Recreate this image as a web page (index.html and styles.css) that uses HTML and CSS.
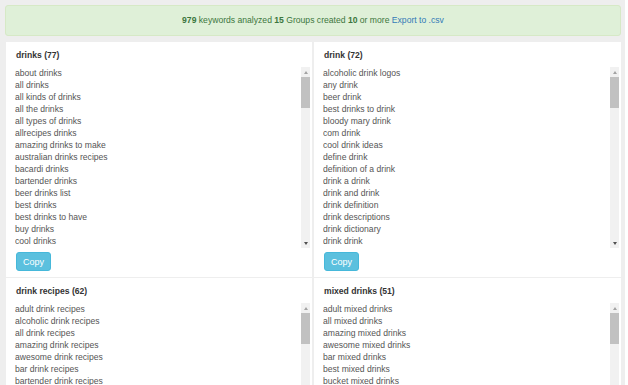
FILE: index.html
```html
<!DOCTYPE html>
<html lang="en">
<head>
    <meta charset="UTF-8">
    <title>Keyword Groups</title>
    <link rel="stylesheet" href="styles.css">
</head>
<body>
    <div class="page">
        <div class="alert">
            <b>979</b> keywords analyzed <b>15</b> Groups created <b>10</b> or more <a href="#">Export to .csv</a>
        </div>
        <div class="groups">
            <div class="group">
                <h4>drinks (77)</h4>
                <div class="listBox">
                    <textarea class="kwList" readonly>about drinks
all drinks
all kinds of drinks
all the drinks
all types of drinks
allrecipes drinks
amazing drinks to make
australian drinks recipes
bacardi drinks
bartender drinks
beer drinks list
best drinks
best drinks to have
buy drinks
cool drinks
cool drinks to make
crown royal drinks
different drinks
drinks at home
drinks delivered
drinks for parties
drinks for women
drinks list
drinks menu
drinks near me
drinks online
drinks recipes
drinks to make
drinks with gin
drinks with rum
drinks with vodka
drinks with whiskey
easy drinks
easy drinks to make
energy drinks
fancy drinks
flavored drinks
frozen drinks
fruity drinks
fun drinks
fun drinks to make
gin drinks
girly drinks
good drinks
good drinks to order
healthy drinks
hot drinks
ice drinks
iced drinks
kahlua drinks
list of drinks
malibu drinks
margarita drinks
martini drinks
new drinks
non alcoholic drinks
party drinks
popular drinks
punch drinks
rum drinks
shot drinks
simple drinks
smoothie drinks
soft drinks
spiked drinks
sports drinks
strong drinks
summer drinks
sweet drinks
tequila drinks
top drinks
tropical drinks
types of drinks
vodka drinks
whiskey drinks
wine drinks
winter drinks</textarea>
                    <div class="scrollBar">
                        <span class="arrowUp"></span>
                        <span class="thumb"></span>
                        <span class="arrowDown"></span>
                    </div>
                </div>
                <button type="button" class="btnCopy">Copy</button>
            </div>
            <div class="group">
                <h4>drink (72)</h4>
                <div class="listBox">
                    <textarea class="kwList" readonly>alcoholic drink logos
any drink
beer drink
best drinks to drink
bloody mary drink
com drink
cool drink ideas
define drink
definition of a drink
drink a drink
drink and drink
drink definition
drink descriptions
drink dictionary
drink drink
drink for a party
drink glasses
drink holder
drink ideas
drink in spanish
drink images
drink logo
drink menu
drink mixer
drink name ideas
drink names
drink of the day
drink online
drink pictures
drink quotes
drink sign
drink specials
drink station
drink synonym
drink tickets
drink up
drink water
drink with me
drinking drink
easy drink
easy drink ideas
energy drink
fancy drink
favorite drink
fruit drink
fun drink
good drink
green drink
healthy drink
hot drink
house drink
ice drink
latest drink
lemon drink
mango drink
mixed drink
new drink
orange drink
party drink
pink drink
popular drink
protein drink
purple drink
red drink
signature drink
soft drink
sports drink
summer drink
sweet drink
the drink
tropical drink
winter drink</textarea>
                    <div class="scrollBar">
                        <span class="arrowUp"></span>
                        <span class="thumb"></span>
                        <span class="arrowDown"></span>
                    </div>
                </div>
                <button type="button" class="btnCopy">Copy</button>
            </div>
            <div class="group">
                <h4>drink recipes (62)</h4>
                <div class="listBox">
                    <textarea class="kwList" readonly>adult drink recipes
alcoholic drink recipes
all drink recipes
amazing drink recipes
awesome drink recipes
bar drink recipes
bartender drink recipes
basic drink recipes
best drink recipes
blue drink recipes
bourbon drink recipes
brandy drink recipes
christmas drink recipes
classic drink recipes
coconut drink recipes
coffee drink recipes
cold drink recipes
cool drink recipes
cocktail drink recipes
drink recipes app
drink recipes book
drink recipes for parties
drink recipes list
drink recipes with gin
drink recipes with rum
drink recipes with vodka
easy drink recipes
fall drink recipes
famous drink recipes
frozen drink recipes
fruity drink recipes
fun drink recipes
gin drink recipes
good drink recipes
healthy drink recipes
holiday drink recipes
hot drink recipes
kahlua drink recipes
malibu drink recipes
mixed drink recipes
new drink recipes
party drink recipes
popular drink recipes
punch drink recipes
quick drink recipes
rum drink recipes
shot drink recipes
simple drink recipes
smoothie drink recipes
sour drink recipes
strong drink recipes
summer drink recipes
sweet drink recipes
tequila drink recipes
top drink recipes
tropical drink recipes
unique drink recipes
vodka drink recipes
whiskey drink recipes
wine drink recipes
winter drink recipes
yummy drink recipes</textarea>
                    <div class="scrollBar">
                        <span class="arrowUp"></span>
                        <span class="thumb"></span>
                        <span class="arrowDown"></span>
                    </div>
                </div>
                <button type="button" class="btnCopy">Copy</button>
            </div>
            <div class="group">
                <h4>mixed drinks (51)</h4>
                <div class="listBox">
                    <textarea class="kwList" readonly>adult mixed drinks
all mixed drinks
amazing mixed drinks
awesome mixed drinks
bar mixed drinks
best mixed drinks
bucket mixed drinks
cheap mixed drinks
classic mixed drinks
cool mixed drinks
easy mixed drinks
fancy mixed drinks
frozen mixed drinks
fruity mixed drinks
fun mixed drinks
gin mixed drinks
girly mixed drinks
good mixed drinks
list of mixed drinks
mixed drinks at home
mixed drinks for parties
mixed drinks list
mixed drinks menu
mixed drinks names
mixed drinks recipes
mixed drinks to make
mixed drinks with gin
mixed drinks with rum
mixed drinks with tequila
mixed drinks with vodka
mixed drinks with whiskey
new mixed drinks
party mixed drinks
pink mixed drinks
popular mixed drinks
punch mixed drinks
rum mixed drinks
simple mixed drinks
strong mixed drinks
summer mixed drinks
sweet mixed drinks
tasty mixed drinks
tequila mixed drinks
top mixed drinks
tropical mixed drinks
types of mixed drinks
unique mixed drinks
vodka mixed drinks
whiskey mixed drinks
wine mixed drinks
winter mixed drinks</textarea>
                    <div class="scrollBar">
                        <span class="arrowUp"></span>
                        <span class="thumb"></span>
                        <span class="arrowDown"></span>
                    </div>
                </div>
                <button type="button" class="btnCopy">Copy</button>
            </div>
        </div>
    </div>
</body>
</html>
```

FILE: styles.css
```css
html, body{
    margin: 0;
    height: 385px;
    overflow: hidden;
    background-color: #fff;
    font-family: "Liberation Sans", Arial, sans-serif;
    font-size: 9px;
    color: #333;
}
.page{
    width: 625px;
    height: 385px;
    box-sizing: border-box;
    padding: 5px 4px 0 5px;
    background-color: #eee;
}
.alert{
    height: 31px;
    box-sizing: border-box;
    border: 1px solid #d6e9c6;
    border-radius: 3px;
    background-color: #dff0d8;
    color: #3c763d;
    text-align: center;
    line-height: 29px;
    font-size: 8.6px;
}
.alert b{
    font-weight: bold;
}
.alert a{
    color: #337ab7;
    text-decoration: none;
}
.groups{
    margin-top: 6px;
    margin-left: 1px;
    display: grid;
    grid-template-columns: 306px 307px;
    column-gap: 2px;
    row-gap: 1px;
}
.group{
    background-color: #fff;
    padding: 7px 1px 6px 10px;
    display: flex;
    flex-direction: column;
    align-items: flex-start;
}
.group h4{
    margin: 0;
    font-size: 8.6px;
    line-height: 12px;
    font-weight: bold;
    color: #333;
}
.listBox{
    margin: 6px 0 0 -1px;
    width: 100%;
    height: 181px;
    display: flex;
}
.kwList{
    flex: 1;
    margin: 0;
    padding: 0;
    height: 181px;
    box-sizing: border-box;
    border: none;
    outline: none;
    resize: none;
    font-family: "Liberation Sans", Arial, sans-serif;
    font-size: 8.6px;
    line-height: 12px;
    color: #555;
    background-color: #fff;
    overflow: hidden;
}
.scrollBar{
    width: 9px;
    background-color: #f1f1f1;
    display: flex;
    flex-direction: column;
    align-items: center;
}
.thumb{
    width: 9px;
    height: 31px;
    background-color: #c1c1c1;
}
.arrowUp, .arrowDown{
    height: 10px;
    width: 9px;
    display: flex;
    align-items: center;
    justify-content: center;
}
.arrowDown{
    margin-top: auto;
}
.arrowUp::after{
    content: "";
    border-left: 2.5px solid transparent;
    border-right: 2.5px solid transparent;
    border-bottom: 3px solid #a3a3a3;
}
.arrowDown::after{
    content: "";
    border-left: 2.5px solid transparent;
    border-right: 2.5px solid transparent;
    border-top: 3px solid #505050;
}
.btnCopy{
    margin-top: 4px;
    width: 35px;
    height: 19px;
    padding: 0;
    border: 1px solid #46b8da;
    border-radius: 3px;
    background-color: #5bc0de;
    color: #fff;
    font-family: "Liberation Sans", Arial, sans-serif;
    font-size: 9px;
}
```
